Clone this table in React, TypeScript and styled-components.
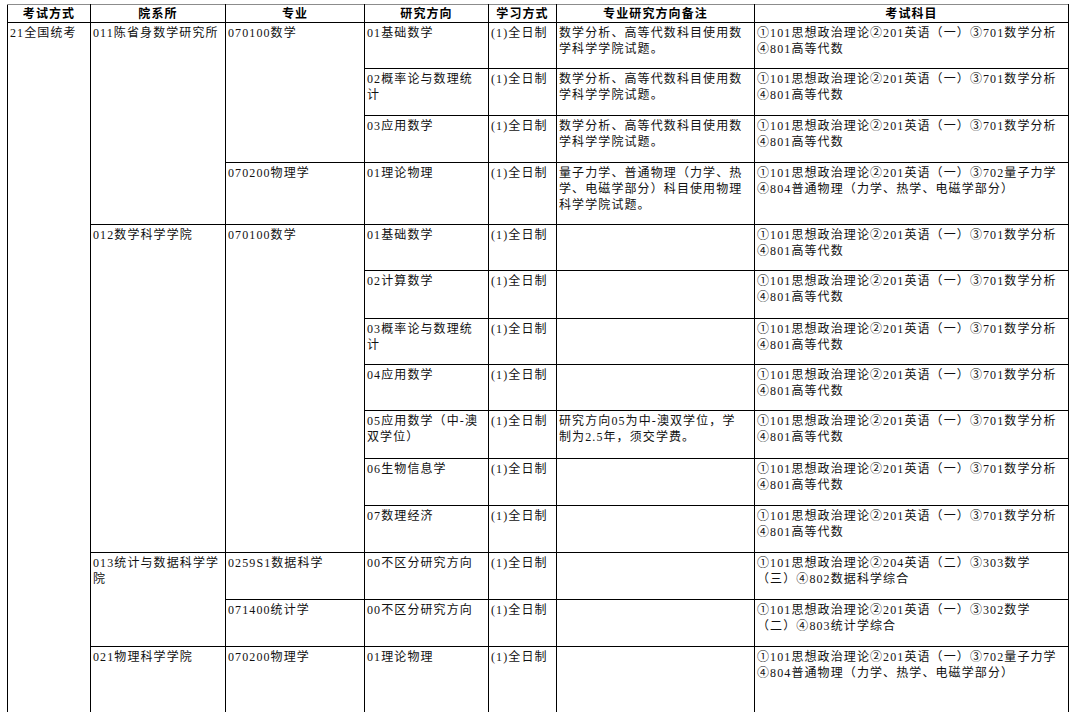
import * as React from 'react';
import styled, { createGlobalStyle } from 'styled-components';

const GlobalStyle = createGlobalStyle`
  html, body {
    margin: 0;
    padding: 0;
    background: #fff;
    overflow: hidden;
  }
`;

type Line = string;

interface IRow {
  h: number;
  dept?: { text: Line; span: number };
  major?: { text: Line; span: number };
  dir: Line;
  note: Line;
  exam: Line;
}

const NOTE_MATH = '数学分析、高等代数科目使用数\n学科学学院试题。';
const NOTE_PHYS = '量子力学、普通物理（力学、热\n学、电磁学部分）科目使用物理\n科学学院试题。';
const EXAM_MATH = '①101思想政治理论②201英语（一）③701数学分析\n④801高等代数';
const EXAM_PHYS = '①101思想政治理论②201英语（一）③702量子力学\n④804普通物理（力学、热学、电磁学部分）';

const rows: IRow[] = [
  { h: 46, dept: { text: '011陈省身数学研究所', span: 4 }, major: { text: '070100数学', span: 3 }, dir: '01基础数学', note: NOTE_MATH, exam: EXAM_MATH },
  { h: 47, dir: '02概率论与数理统\n计', note: NOTE_MATH, exam: EXAM_MATH },
  { h: 47, dir: '03应用数学', note: NOTE_MATH, exam: EXAM_MATH },
  { h: 62, major: { text: '070200物理学', span: 1 }, dir: '01理论物理', note: NOTE_PHYS, exam: EXAM_PHYS },
  { h: 46, dept: { text: '012数学科学学院', span: 7 }, major: { text: '070100数学', span: 7 }, dir: '01基础数学', note: '', exam: EXAM_MATH },
  { h: 48, dir: '02计算数学', note: '', exam: EXAM_MATH },
  { h: 46, dir: '03概率论与数理统\n计', note: '', exam: EXAM_MATH },
  { h: 46, dir: '04应用数学', note: '', exam: EXAM_MATH },
  { h: 48, dir: '05应用数学（中-澳\n双学位）', note: '研究方向05为中-澳双学位，学\n制为2.5年，须交学费。', exam: EXAM_MATH },
  { h: 47, dir: '06生物信息学', note: '', exam: EXAM_MATH },
  { h: 47, dir: '07数理经济', note: '', exam: EXAM_MATH },
  { h: 47, dept: { text: '013统计与数据科学学\n院', span: 2 }, major: { text: '0259S1数据科学', span: 1 }, dir: '00不区分研究方向', note: '', exam: '①101思想政治理论②204英语（二）③303数学\n（三）④802数据科学综合' },
  { h: 47, major: { text: '071400统计学', span: 1 }, dir: '00不区分研究方向', note: '', exam: '①101思想政治理论②201英语（一）③302数学\n（二）④803统计学综合' },
  { h: 80, dept: { text: '021物理科学学院', span: 1 }, major: { text: '070200物理学', span: 1 }, dir: '01理论物理', note: '', exam: EXAM_PHYS },
];

const colWidths = [83, 135, 139, 124, 68, 198, 314];
const headers = ['考试方式', '院系所', '专业', '研究方向', '学习方式', '专业研究方向备注', '考试科目'];

export default function App() {
  return (
    <>
      <GlobalStyle />
      <Sheet>
        <Grid>
          <colgroup>
            {colWidths.map((w, i) => <col key={i} style={{ width: w }} />)}
          </colgroup>
          <thead>
            <HeadRow>
              {headers.map(t => <Th key={t}>{t}</Th>)}
            </HeadRow>
          </thead>
          <tbody>
            {rows.map((r, i) => (
              <Row key={i} $h={r.h}>
                {i === 0 && <Td rowSpan={rows.length}>21全国统考</Td>}
                {r.dept && <Td rowSpan={r.dept.span}>{r.dept.text}</Td>}
                {r.major && <Td rowSpan={r.major.span}>{r.major.text}</Td>}
                <Td>{r.dir}</Td>
                <Td>(1)全日制</Td>
                <Td>{r.note}</Td>
                <Td>{r.exam}</Td>
              </Row>
            ))}
          </tbody>
        </Grid>
      </Sheet>
    </>
  );
}

const Sheet = styled("div")`
  padding: 4px 0 0 7px;
  height: 712px;
  overflow: hidden;
  box-sizing: border-box;
`;

const Grid = styled("table")`
  width: 1062px;
  table-layout: fixed;
  border-collapse: collapse;
  font-family: "Liberation Serif", "Noto Sans CJK SC", serif;
  font-size: 12px;
  letter-spacing: 1.1px;
  color: #111;
`;

const HeadRow = styled("tr")`
  height: 18px;
`;

const Th = styled("th")`
  border: 1px solid #000;
  border-top-color: #8c8c8c;
  padding: 0;
  font-weight: bold;
  line-height: 16px;
  text-align: center;
  vertical-align: middle;
  color: #000;
`;

const Row = styled("tr")<{ $h: number }>`
  height: ${p => p.$h}px;
`;

const Td = styled("td")`
  border: 1px solid #000;
  padding: 2px 1px 0 2px;
  line-height: 16px;
  vertical-align: top;
  white-space: pre-line;
  overflow: hidden;
`;
